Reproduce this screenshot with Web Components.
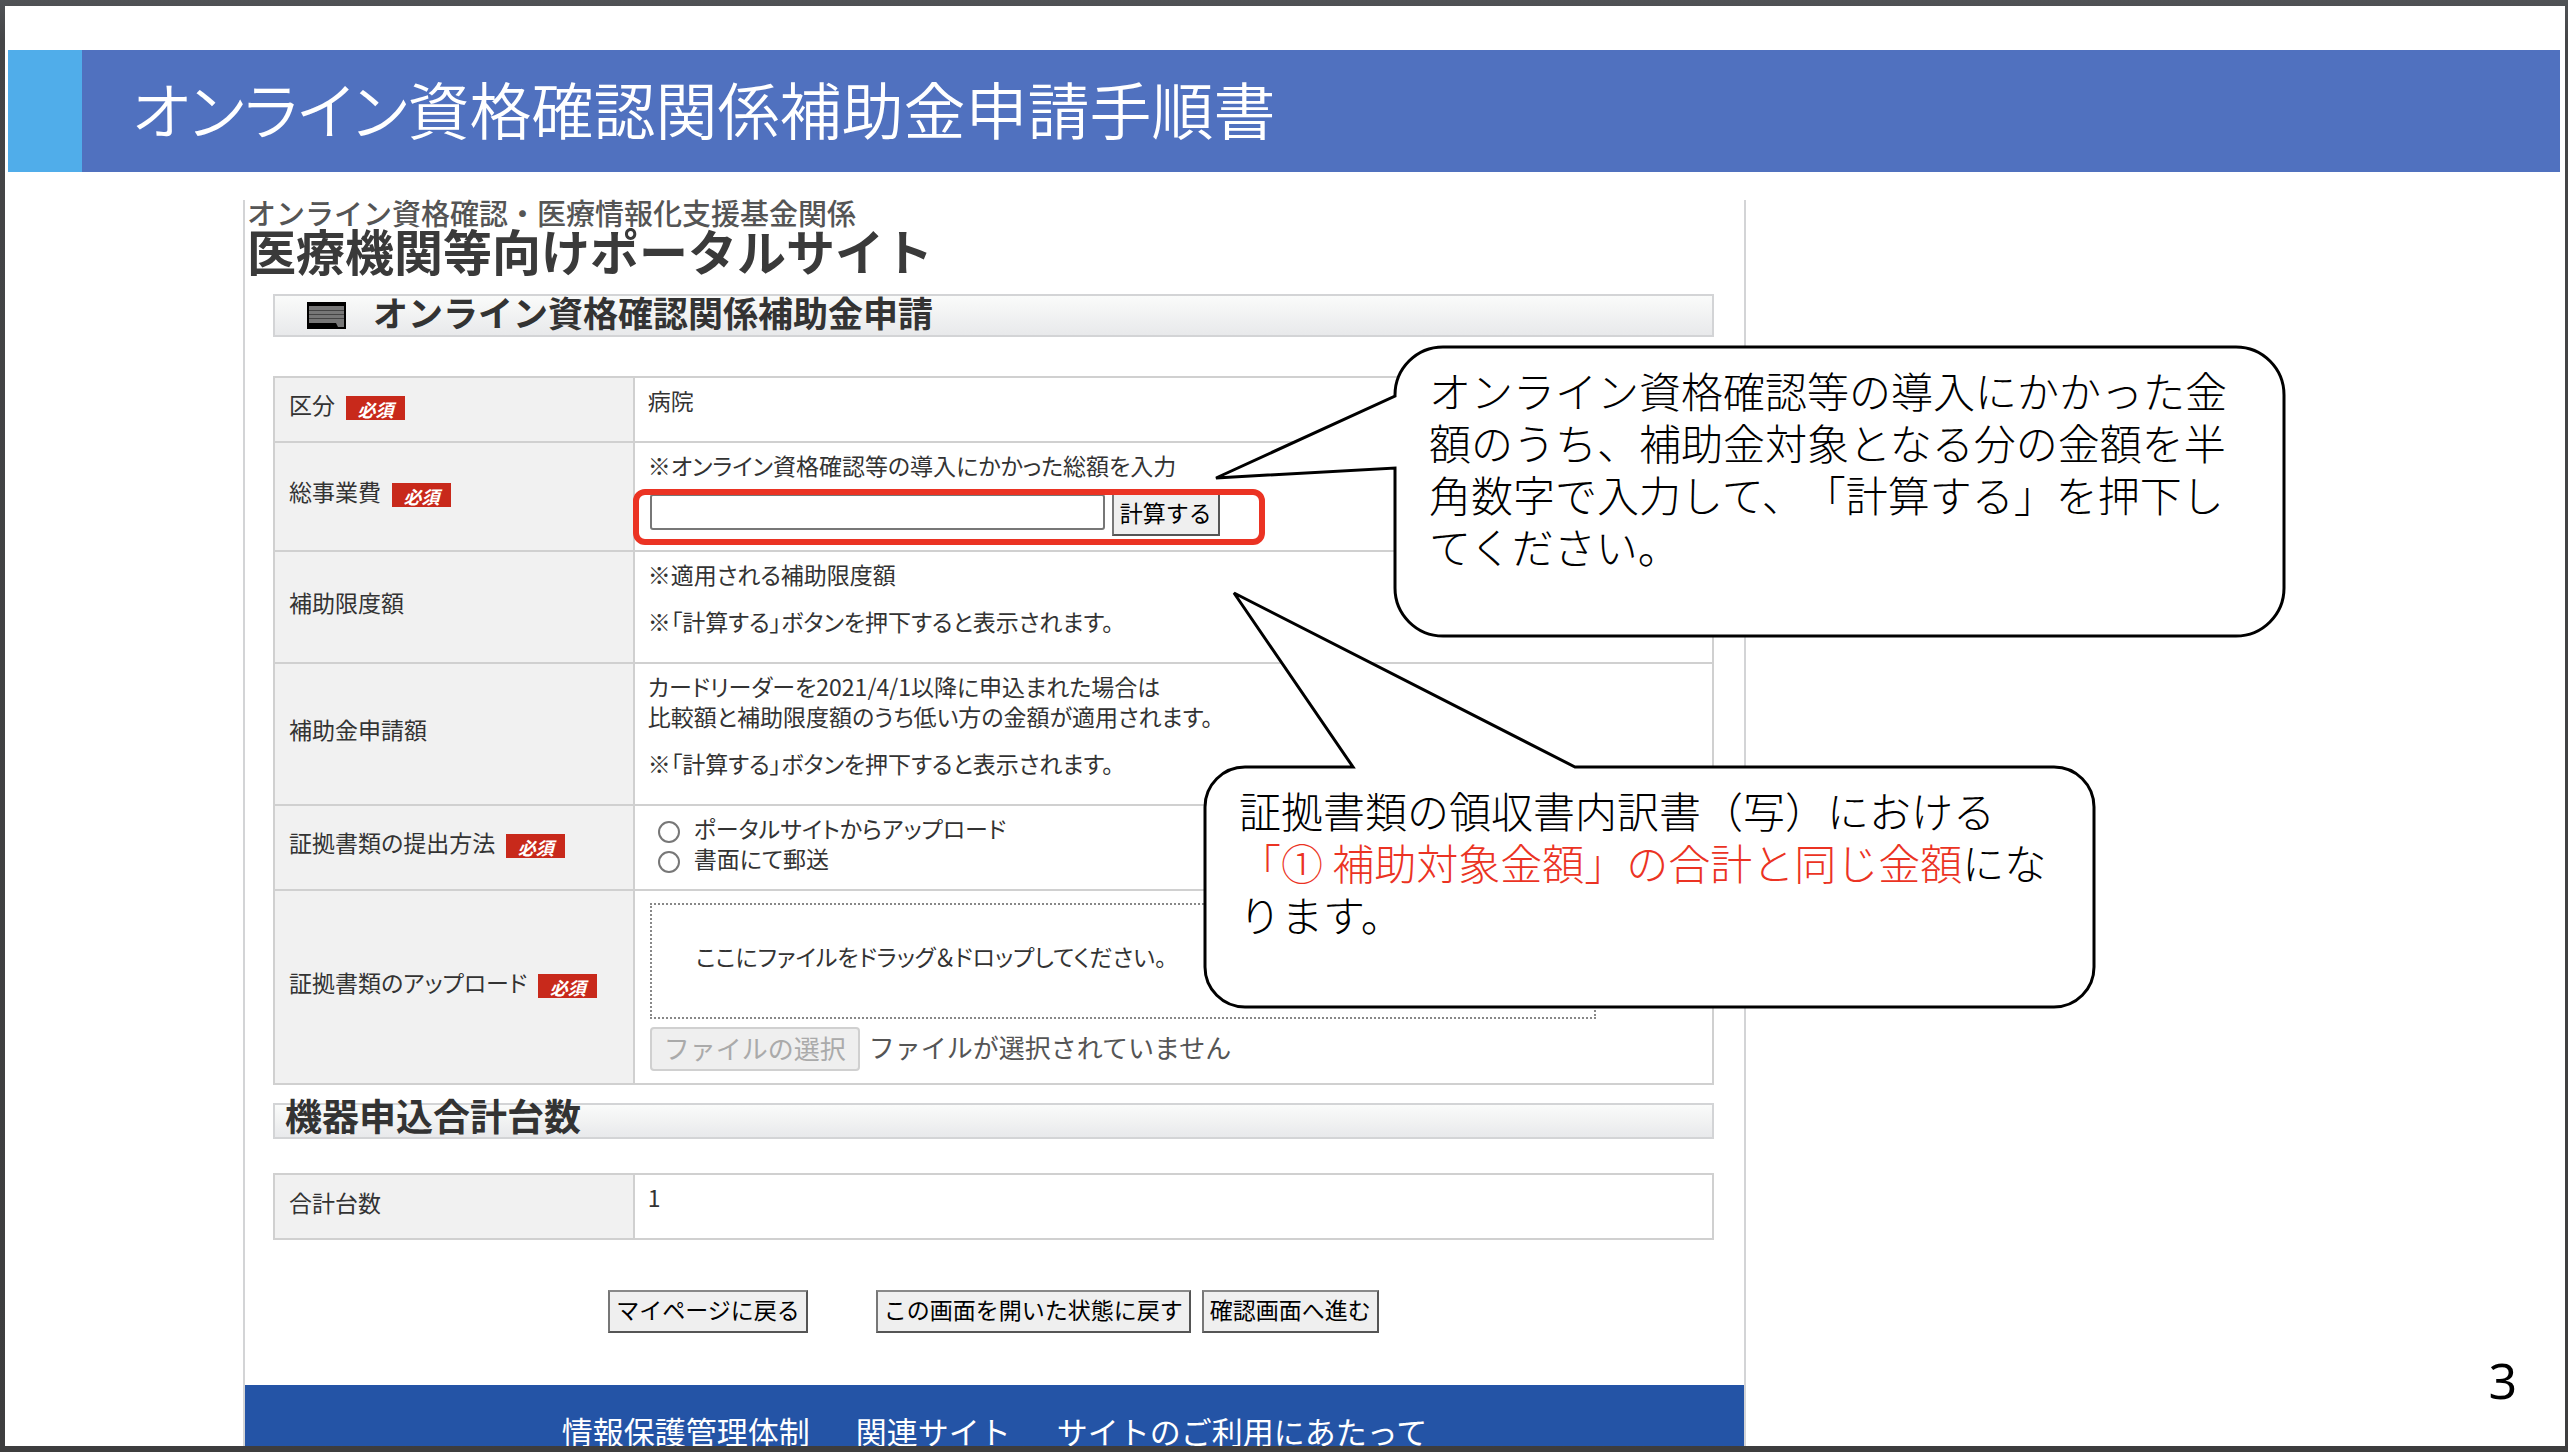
<!DOCTYPE html>
<html lang="ja">
<head>
<meta charset="utf-8">
<title>オンライン資格確認関係補助金申請手順書</title>
<style>
  body { margin: 0; font-family: "Noto Sans CJK JP", sans-serif; color: #333; background: #47484a; }
</style>
</head>
<body>
<slide-page>
  <slide-banner slot="banner">オンライン資格確認関係補助金申請手順書</slide-banner>
  <portal-site>
    <portal-logo slot="head"><span slot="sub">オンライン資格確認・医療情報化支援基金関係</span>医療機関等向けポータルサイト</portal-logo>
    <section-bar icon>オンライン資格確認関係補助金申請</section-bar>
    <grant-form></grant-form>
    <portal-footer slot="foot"></portal-footer>
  </portal-site>
  <speech-callout slot="over" class="cost">オンライン資格確認等の導入にかかった金<br>額のうち、補助金対象となる分の金額を半<br>角数字で入力して、「計算する」を押下し<br>てください。</speech-callout>
  <speech-callout slot="over" class="receipt" side="top">証拠書類の領収書内訳書（写）における<br><em>「① 補助対象金額」の合計と同じ金額</em>にな<br>ります。</speech-callout>
  <page-number slot="over">3</page-number>
</slide-page>

<script>
const define = (name, html, setup) => {
  const template = document.createElement('template');
  template.innerHTML = html;
  customElements.define(name, class extends HTMLElement {
    constructor() {
      super();
      this.attachShadow({ mode: 'open' }).append(template.content.cloneNode(true));
    }
    connectedCallback() { if (setup) setup(this, this.shadowRoot); }
  });
};

define('slide-page', `
  <style>
    :host { display: flex; box-sizing: border-box; height: 100vh; padding: 6px 3px 6px 5px; overflow: hidden;
      background: linear-gradient(#505356, #444547 40px, #3d3d3e); }
    main { position: relative; flex: 1; display: flex; flex-direction: column; background: #fff; overflow: hidden; }
    ::slotted(speech-callout), ::slotted(page-number) { position: absolute; }
    ::slotted(.cost) { left: 1390px; top: 341px; width: 889px; height: 289px; }
    ::slotted(.receipt) { left: 1200px; top: 761px; width: 889px; height: 240px; }
    ::slotted(page-number) { right: 48px; bottom: 32px; }
  </style>
  <main>
    <slot name="banner"></slot>
    <slot></slot>
    <slot name="over"></slot>
  </main>`);

define('slide-banner', `
  <style>
    :host { display: block; margin: 44px 5px 28px 3px; }
    h1 { margin: 0; padding: 0 0 6px 50px; border-left: 74px solid #50adea; background: #5071bf; color: #fff;
      font-size: 62px; line-height: 116px; font-weight: 350; font-feature-settings: "palt"; }
  </style>
  <h1><slot></slot></h1>`);

define('portal-site', `
  <style>
    :host { flex: 1; display: flex; flex-direction: column; margin: 0 819px 0 238px;
      border: solid #d3d4d6; border-width: 0 2px; background: #fff; }
    .body { padding: 0 30px 0 28px; }
    .foot { flex: 1; display: flex; flex-direction: column; }
  </style>
  <slot name="head"></slot>
  <div class="body"><slot></slot></div>
  <div class="foot"><slot name="foot"></slot></div>`);

define('portal-logo', `
  <style>
    :host { display: block; padding-left: 2px; }
    .sub { font-size: 29px; line-height: 24px; padding-bottom: 2px; font-weight: 500; color: #555; }
    .name { font-size: 49px; line-height: 48px; padding-bottom: 4px; font-weight: 700; color: #3a3a3a; }
  </style>
  <div class="sub"><slot name="sub"></slot></div>
  <div class="name"><slot></slot></div>`);

define('section-bar', `
  <style>
    :host { display: block; margin-top: 16px; font-size: 35px; line-height: 39px; }
    h2 { margin: 0; display: flex; align-items: center; gap: 26px; padding-left: 32px; border: 2px solid #d3d4d6;
      background: linear-gradient(#fafbfa, #e8e9eb); font-size: inherit; font-weight: 700; color: #333; }
    svg { display: none; }
    :host([icon]) svg { display: block; }
    :host(:not([icon])) { margin-top: 18px; font-size: 37px; line-height: 32px; }
    :host(:not([icon])) h2 { padding-left: 10px; }
    span { display: block; height: 1lh; margin-top: -4px; margin-bottom: 4px; }
    :host(:not([icon])) span { margin-top: -6px; margin-bottom: 6px; }
  </style>
  <h2>
    <svg width="40" height="28" viewBox="0 0 40 28" aria-hidden="true">
      <rect width="39" height="27" fill="#000"/>
      <path d="M2 4h35v17H2z" fill="#777"/>
      <path d="M2 8.500h35M2 12.500h35M2 16.500h35" stroke="#444" stroke-width="1"/>
      <path d="M29 21h8v4h-6z" fill="#777"/>
    </svg>
    <span><slot></slot></span>
  </h2>`);

define('required-badge', `
  <style>
    :host { display: inline-block; box-sizing: border-box; width: 59px; height: 24px; margin-left: 11px;
      vertical-align: -3px; background: #c8291b; color: #fff; font: italic 700 18px/26px "Noto Sans CJK JP", sans-serif; text-align: center; }
  </style>必須`);

define('grant-form', `
  <style>
    :host { display: block; font-size: 23px; line-height: 30px; }
    table { width: 100%; border-collapse: collapse; table-layout: fixed; margin-top: 39px; font-feature-settings: "palt"; }
    col.label { width: 25%; }
    th, td { border: 2px solid #d0d0d0; font-weight: 400; text-align: left; box-sizing: border-box; }
    th { background: #f1f1f1; padding: 0 0 10px 14px; vertical-align: middle; white-space: nowrap; }
    td { padding: 7px 13px 0; vertical-align: top; white-space: nowrap; }
    p { margin: 0; }
    p + p.note { margin-top: 17px; }
    button { box-sizing: border-box; padding: 0 6px 4px; background: #efefef; border: 2px solid #555; border-radius: 0;
      border-top-color: #888; border-left-color: #777;
      font: 23px/35px "Noto Sans CJK JP", sans-serif; color: #000; }
    .calc { position: relative; display: flex; align-items: flex-start; gap: 7px; width: max-content; margin-top: 13px; padding-left: 2px; }
    .calc::after { content: ""; position: absolute; inset: -4px -45px -9px -15px; border: 6px solid #eb3323; border-radius: 12px; pointer-events: none; }
    .calc input { box-sizing: border-box; width: 455px; height: 36px; margin: 1px 0 0; border: 2px solid #777; border-radius: 3px; background: #fff; font-size: 23px; }
    label.choice { display: flex; align-items: flex-start; gap: 14px; margin-left: 10px; }
    label.choice input { appearance: none; box-sizing: border-box; width: 22px; height: 22px; margin: 8px 0 0; border: 2px solid #777; border-radius: 50%; background: #fff; }
    .drop { box-sizing: border-box; width: 90%; height: 116px; margin: 5px 0 8px 2px; padding: 36px 44px 0; border: 2px dotted #888; }
    .file { display: flex; align-items: center; gap: 9px; margin-left: 2px; font-size: 26px; line-height: 40px; font-feature-settings: normal; }
    .file button { padding: 0 12px 2px; border: 2px solid #d0d0d0; border-radius: 4px; font-size: 26px; line-height: 38px; color: #aaa; }
    .file span { padding-bottom: 4px; color: #555; }
    .actions { display: flex; justify-content: center; gap: 11px; margin-top: 50px; padding-bottom: 52px; }
    .actions button:first-child { margin-right: 57px; }
    table.total { margin-top: 34px; }
  </style>
  <table>
    <colgroup><col class="label"><col></colgroup>
    <tr style="height:65px"><th scope="row">区分<required-badge></required-badge></th><td>病院</td></tr>
    <tr style="height:109px"><th scope="row"><label for="cost">総事業費</label><required-badge></required-badge></th>
      <td><p>※オンライン資格確認等の導入にかかった総額を入力</p>
        <div class="calc"><input id="cost" type="text" inputmode="numeric"><button type="button">計算する</button></div></td></tr>
    <tr style="height:112px"><th scope="row">補助限度額</th>
      <td><p>※適用される補助限度額</p><p class="note">※「計算する」ボタンを押下すると表示されます。</p></td></tr>
    <tr style="height:142px"><th scope="row">補助金申請額</th>
      <td><p>カードリーダーを2021/4/1以降に申込まれた場合は</p><p>比較額と補助限度額のうち低い方の金額が適用されます。</p><p class="note">※「計算する」ボタンを押下すると表示されます。</p></td></tr>
    <tr style="height:85px"><th scope="row">証拠書類の提出方法<required-badge></required-badge></th>
      <td><label class="choice"><input type="radio" name="method">ポータルサイトからアップロード</label>
        <label class="choice"><input type="radio" name="method">書面にて郵送</label></td></tr>
    <tr style="height:194px"><th scope="row">証拠書類のアップロード<required-badge></required-badge></th>
      <td><div class="drop">ここにファイルをドラッグ＆ドロップしてください。</div>
        <div class="file"><button type="button" disabled>ファイルの選択</button><span>ファイルが選択されていません</span></div></td></tr>
  </table>
  <section-bar>機器申込合計台数</section-bar>
  <table class="total">
    <colgroup><col class="label"><col></colgroup>
    <tr style="height:65px"><th scope="row">合計台数</th><td>1</td></tr>
  </table>
  <div class="actions">
    <button type="button">マイページに戻る</button>
    <button type="button">この画面を開いた状態に戻す</button>
    <button type="button">確認画面へ進む</button>
  </div>`);

define('portal-footer', `
  <style>
    :host { flex: 1; display: block; padding-top: 26px; background: #2454a6; }
    nav { display: flex; justify-content: center; gap: 46px; }
    a { color: #fff; text-decoration: none; font-size: 31px; line-height: 40px; }
  </style>
  <nav><a href="#security">情報保護管理体制</a><a href="#links">関連サイト</a><a href="#terms">サイトのご利用にあたって</a></nav>`);

define('speech-callout', `
  <style>
    :host { display: block; box-sizing: border-box; padding: 17px 0 0 34px; color: #000; font-size: 42px; line-height: 52px;
      font-weight: 300; white-space: nowrap; text-spacing-trim: space-all; }
    svg { position: absolute; inset: 0; width: 100%; height: 100%; overflow: visible; }
    path { fill: #fff; stroke: #000; stroke-width: 3; stroke-linejoin: miter; }
    div { position: relative; }
    ::slotted(em) { font-style: normal; color: #eb3323; }
  </style>
  <svg aria-hidden="true"><path/></svg>
  <div><slot></slot></div>`, (host, root) => {
    const w = host.offsetWidth, h = host.offsetHeight;
    const top = host.getAttribute('side') === 'top';
    const r = top ? 40 : 48;
    const topTail = top ? `H148L29 -174L370 0` : '';
    const leftTail = top ? '' : `V121L-179 131L0 49`;
    root.querySelector('path').setAttribute('d',
      `M${r} 0${topTail}H${w - r}A${r} ${r} 0 0 1 ${w} ${r}V${h - r}A${r} ${r} 0 0 1 ${w - r} ${h}H${r}A${r} ${r} 0 0 1 0 ${h - r}${leftTail}V${r}A${r} ${r} 0 0 1 ${r} 0Z`);
  });

define('page-number', `
  <style>:host { display: block; color: #000; font: 50px/68px "Noto Sans", sans-serif; }</style>
  <slot></slot>`);
</script>
</body>
</html>
